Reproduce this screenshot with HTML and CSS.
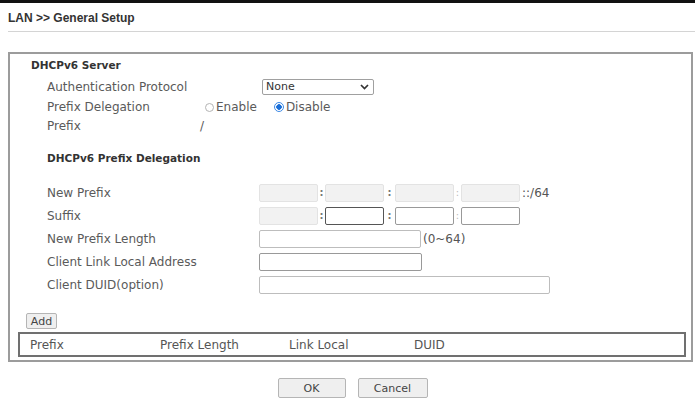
FILE: index.html
```html
<!DOCTYPE html>
<html lang="en">
<head>
  <meta charset="UTF-8" />
  <title>LAN &gt;&gt; General Setup</title>
  <link rel="stylesheet" href="styles.css">
</head>
<body>
  <div class="topbar"></div>
  <div class="crumb">LAN &gt;&gt; General Setup</div>
  <div class="sep"></div>

  <div class="panel">
    <div class="sec-title">DHCPv6 Server</div>
    <div class="server-grid">
      <div class="lbl">Authentication Protocol</div>
      <div class="val">
        <span class="selwrap">
          <select class="sel"><option>None</option></select>
          <svg class="chev" width="9" height="6" viewBox="0 0 9 6"><path d="M1 1 L4.5 4.5 L8 1" fill="none" stroke="#333" stroke-width="1.7"/></svg>
        </span>
      </div>
      <div class="lbl">Prefix Delegation</div>
      <div class="val radios">
        <label class="rad"><input type="radio" name="pd">Enable</label>
        <label class="rad"><input type="radio" name="pd" checked>Disable</label>
      </div>
      <div class="lbl">Prefix</div>
      <div class="val">/</div>
    </div>

    <div class="sub-title">DHCPv6 Prefix Delegation</div>
    <div class="pd-grid">
      <div class="lbl">New Prefix</div>
      <div class="field">
        <input class="box seg" disabled><span class="colon">:</span>
        <input class="box seg" disabled><span class="colon wide">:</span>
        <input class="box seg" disabled><span class="colon faint">:</span>
        <input class="box seg" disabled><span class="unit">::/64</span>
      </div>
      <div class="lbl">Suffix</div>
      <div class="field">
        <input class="box seg" disabled><span class="colon">:</span>
        <input class="box seg dark"><span class="colon wide">:</span>
        <input class="box seg"><span class="colon faint">:</span>
        <input class="box seg">
      </div>
      <div class="lbl">New Prefix Length</div>
      <div class="field"><input class="box len light"><span class="unit">(0~64)</span></div>
      <div class="lbl">Client Link Local Address</div>
      <div class="field"><input class="box link"></div>
      <div class="lbl">Client DUID(option)</div>
      <div class="field"><input class="box duid light"></div>
    </div>

    <button class="btn add">Add</button>
    <div class="list-head">
      <span class="c1">Prefix</span>
      <span class="c2">Prefix Length</span>
      <span class="c3">Link Local</span>
      <span>DUID</span>
    </div>
  </div>

  <div class="actions">
    <button class="btn ok">OK</button>
    <button class="btn cancel">Cancel</button>
  </div>
</body>
</html>
```
FILE: styles.css
```css
html,body{margin:0;padding:0;background:#fff;font-family:"DejaVu Sans",Verdana,sans-serif;font-size:12px;color:#5a5a5a}
.topbar{height:3px;background:#111}
.crumb{height:28px;padding-left:8px;font:bold 12px "Liberation Sans",Arial,sans-serif;line-height:30px;color:#333}
.sep{margin-left:8px;border-top:1px solid #d4d4d4}

.panel{margin:20px 2px 0 8px;border:2px solid #9c9c9c;padding:0 5px 3px 0}
.sec-title,.sub-title{font-weight:bold;font-size:10.5px;color:#333;padding-left:21px}
.sec-title{height:22px;line-height:22px}
.sub-title{margin-top:13px;height:20px;line-height:20px;padding-left:37px}

.server-grid{display:grid;grid-template-columns:153px auto;grid-template-rows:21px 20px 18px;align-items:center;padding-left:37px}
.selwrap{position:relative;display:inline-block;margin-left:62px;vertical-align:middle}
.sel{appearance:none;-webkit-appearance:none;width:112px;height:16px;margin:0;padding:0 3px;border:1px solid #a0a0a0;border-radius:2px;background:#fff;font:11px "DejaVu Sans",Verdana,sans-serif;color:#333;display:block}
.chev{position:absolute;right:5px;top:5px;pointer-events:none}

.radios{display:flex;align-items:center;padding-left:5px}
.rad{display:flex;align-items:center;gap:2px;margin-right:17px}
.rad input{appearance:none;-webkit-appearance:none;width:9px;height:9px;margin:0;border:1px solid #b4b4b4;border-radius:50%;background:#fff}
.rad input:checked{width:10px;height:10px;border:1.5px solid #3d8ae6;background:radial-gradient(circle,#1a6fd8 0 2.5px,#fff 3px)}

.pd-grid{margin-top:13px;display:grid;grid-template-columns:212px auto;grid-auto-rows:23px;align-items:center;padding-left:37px}
.field{display:flex;align-items:center}
.box{height:18px;box-sizing:border-box;margin:0;padding:0 3px;border:1px solid #999;border-radius:2px;background:#fff;font:11px "DejaVu Sans",Verdana,sans-serif}
.box:disabled{background:#f2f2f2;border-color:#e3e3e3}
.box.dark{border-color:#555}
.box.light{border-color:#bdbdbd}
.seg{width:59px}
.len{width:162px}
.link{width:163px}
.duid{width:291px}
.colon{width:7px;text-align:center;color:#777;font-weight:bold;font-size:10px}
.colon.wide{width:11px}
.colon.faint{color:#bbb;font-weight:normal}
.unit{margin-left:2px;color:#555}

.btn{display:block;box-sizing:border-box;margin:0;padding:0;border:1px solid #b5b5b5;border-radius:2px;background:#efefef;font:11px "DejaVu Sans",Verdana,sans-serif;color:#444}
.add{margin:17px 0 0 16px;width:31px;height:16px}
.list-head{margin:3px 0 0 8px;height:25px;box-sizing:border-box;border:2px solid #707070;display:flex;align-items:center;padding-left:10px;color:#555}
.list-head .c1{width:130px}
.list-head .c2{width:129px}
.list-head .c3{width:125px}

.actions{margin-top:16px;padding-left:10px;display:flex;justify-content:center;gap:12px}
.ok{width:68px;height:20px}
.cancel{width:70px;height:20px}
```
